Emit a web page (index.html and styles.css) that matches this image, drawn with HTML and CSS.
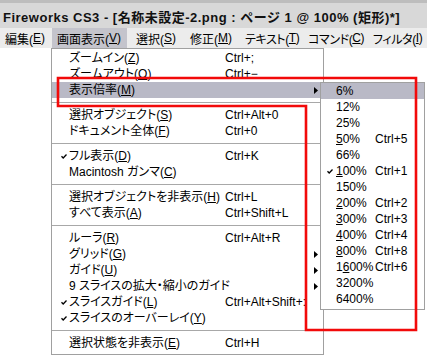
FILE: index.html
```html
<!DOCTYPE html>
<html lang="ja">
<head>
<meta charset="utf-8">
<title>Fireworks CS3</title>
<link rel="stylesheet" href="styles.css">
</head>
<body>
<div class="screen">
  <div class="titlebar"><span class="title">Fireworks CS3 - [名称未設定-2.png : ページ 1 @ 100% (矩形)*]</span></div>
  <div class="menubar">
    <span class="mb-item w1">編集(<u>E</u>)</span>
    <span class="mb-item w2 active">画面表示(<u>V</u>)</span>
    <span class="mb-item w3">選択(<u>S</u>)</span>
    <span class="mb-item w4">修正(<u>M</u>)</span>
    <span class="mb-item w5">テキスト(<u>T</u>)</span>
    <span class="mb-item w6">コマンド(<u>C</u>)</span>
    <span class="mb-item w7">フィルタ(<u>I</u>)</span>
  </div>
  <div class="workarea">
    <div class="menu">
      <div class="row"><span class="chk"></span><span class="lbl">ズームイン(<u>Z</u>)</span><span class="sc">Ctrl+;</span><span class="arr"></span></div>
      <div class="row"><span class="chk"></span><span class="lbl">ズームアウト(<u>O</u>)</span><span class="sc">Ctrl+−</span><span class="arr"></span></div>
      <div class="row hl"><span class="chk"></span><span class="lbl">表示倍率(<u>M</u>)</span><span class="sc"></span><span class="arr"><svg width="4" height="7" viewBox="0 0 4 7"><polygon points="0,0 4,3.5 0,7" fill="#000"/></svg></span></div>
      <div class="sep"></div>
      <div class="row"><span class="chk"></span><span class="lbl">選択オブジェクト(<u>S</u>)</span><span class="sc">Ctrl+Alt+0</span><span class="arr"></span></div>
      <div class="row"><span class="chk"></span><span class="lbl">ドキュメント全体(<u>F</u>)</span><span class="sc">Ctrl+0</span><span class="arr"></span></div>
      <div class="sep"></div>
      <div class="row"><span class="chk"><svg width="6" height="5" viewBox="0 0 6 5"><path d="M0.5 2.2 L2.2 4 L5.5 0.5" fill="none" stroke="#000" stroke-width="1.3"/></svg></span><span class="lbl">フル表示(<u>D</u>)</span><span class="sc">Ctrl+K</span><span class="arr"></span></div>
      <div class="row"><span class="chk"></span><span class="lbl">Macintosh ガンマ(<u>C</u>)</span><span class="sc"></span><span class="arr"></span></div>
      <div class="sep"></div>
      <div class="row"><span class="chk"></span><span class="lbl">選択オブジェクトを非表示(<u>H</u>)</span><span class="sc">Ctrl+L</span><span class="arr"></span></div>
      <div class="row"><span class="chk"></span><span class="lbl">すべて表示(<u>A</u>)</span><span class="sc">Ctrl+Shift+L</span><span class="arr"></span></div>
      <div class="sep"></div>
      <div class="row"><span class="chk"></span><span class="lbl">ルーラ(<u>R</u>)</span><span class="sc">Ctrl+Alt+R</span><span class="arr"></span></div>
      <div class="row"><span class="chk"></span><span class="lbl">グリッド(<u>G</u>)</span><span class="sc"></span><span class="arr"><svg width="4" height="7" viewBox="0 0 4 7"><polygon points="0,0 4,3.5 0,7" fill="#000"/></svg></span></div>
      <div class="row"><span class="chk"></span><span class="lbl">ガイド(<u>U</u>)</span><span class="sc"></span><span class="arr"><svg width="4" height="7" viewBox="0 0 4 7"><polygon points="0,0 4,3.5 0,7" fill="#000"/></svg></span></div>
      <div class="row"><span class="chk"></span><span class="lbl">9 スライスの拡大・縮小のガイド</span><span class="sc"></span><span class="arr"><svg width="4" height="7" viewBox="0 0 4 7"><polygon points="0,0 4,3.5 0,7" fill="#000"/></svg></span></div>
      <div class="row"><span class="chk"><svg width="6" height="5" viewBox="0 0 6 5"><path d="M0.5 2.2 L2.2 4 L5.5 0.5" fill="none" stroke="#000" stroke-width="1.3"/></svg></span><span class="lbl">スライスガイド(<u>L</u>)</span><span class="sc">Ctrl+Alt+Shift+:</span><span class="arr"></span></div>
      <div class="row"><span class="chk"><svg width="6" height="5" viewBox="0 0 6 5"><path d="M0.5 2.2 L2.2 4 L5.5 0.5" fill="none" stroke="#000" stroke-width="1.3"/></svg></span><span class="lbl">スライスのオーバーレイ(<u>Y</u>)</span><span class="sc"></span><span class="arr"></span></div>
      <div class="sep"></div>
      <div class="row"><span class="chk"></span><span class="lbl">選択状態を非表示(<u>E</u>)</span><span class="sc">Ctrl+H</span><span class="arr"></span></div>
    </div>

    <div class="submenu">
      <div class="srow hl"><span class="chk"></span><span class="pct">6%</span><span class="sc"></span></div>
      <div class="srow"><span class="chk"></span><span class="pct">12%</span><span class="sc"></span></div>
      <div class="srow"><span class="chk"></span><span class="pct">25%</span><span class="sc"></span></div>
      <div class="srow"><span class="chk"></span><span class="pct"><u>5</u>0%</span><span class="sc">Ctrl+5</span></div>
      <div class="srow"><span class="chk"></span><span class="pct">66%</span><span class="sc"></span></div>
      <div class="srow"><span class="chk"><svg width="6" height="5" viewBox="0 0 6 5"><path d="M0.5 2.2 L2.2 4 L5.5 0.5" fill="none" stroke="#000" stroke-width="1.3"/></svg></span><span class="pct"><u>1</u>00%</span><span class="sc">Ctrl+1</span></div>
      <div class="srow"><span class="chk"></span><span class="pct">150%</span><span class="sc"></span></div>
      <div class="srow"><span class="chk"></span><span class="pct"><u>2</u>00%</span><span class="sc">Ctrl+2</span></div>
      <div class="srow"><span class="chk"></span><span class="pct"><u>3</u>00%</span><span class="sc">Ctrl+3</span></div>
      <div class="srow"><span class="chk"></span><span class="pct"><u>4</u>00%</span><span class="sc">Ctrl+4</span></div>
      <div class="srow"><span class="chk"></span><span class="pct"><u>8</u>00%</span><span class="sc">Ctrl+8</span></div>
      <div class="srow"><span class="chk"></span><span class="pct">1<u>6</u>00%</span><span class="sc">Ctrl+6</span></div>
      <div class="srow"><span class="chk"></span><span class="pct">3200%</span><span class="sc"></span></div>
      <div class="srow"><span class="chk"></span><span class="pct">6400%</span><span class="sc"></span></div>
    </div>

    <svg class="annot" width="427" height="356" viewBox="0 0 427 356">
      <polygon points="58,78 416,78 416,330 306,330 306,106 58,106" fill="none" stroke="#f20a0a" stroke-width="2.6"/>
    </svg>
  </div>
</div>
</body>
</html>
```

FILE: styles.css
```css
* { box-sizing: border-box; }
html, body { margin: 0; padding: 0; background: #fff; }
body {
  font-family: "Liberation Sans", "Noto Sans CJK JP", sans-serif;
  font-size: 12px;
  color: #000;
  font-feature-settings: "palt";
}
.screen {
  position: relative;
  width: 427px;
  height: 356px;
  overflow: hidden;
  background: #fff;
}
u { text-decoration: underline; text-underline-offset: 1px; }

.titlebar {
  height: 28px;
  border-top: 3px solid #bdbdbd;
  background: #d8d8d8;
  display: flex;
  align-items: center;
  padding: 1px 0 0 3px;
}
.title {
  font-weight: bold;
  font-size: 13px;
  letter-spacing: 0.5px;
  white-space: nowrap;
  color: #111;
  font-feature-settings: normal;
}

.menubar {
  height: 20px;
  background: #ececec;
  display: flex;
  align-items: stretch;
}
.mb-item {
  display: flex;
  align-items: center;
  padding-left: 5px;
  white-space: nowrap;
  flex: none;
}
.mb-item.w1 { width: 52px; }
.mb-item.w2 { width: 75px; margin-right: 4px; }
.mb-item.w3 { width: 54px; }
.mb-item.w4 { width: 55px; }
.mb-item.w5 { width: 63px; letter-spacing: -0.4px; }
.mb-item.w6 { width: 65px; letter-spacing: -0.4px; }
.mb-item.w7 { width: 59px; letter-spacing: -0.4px; }
.mb-item.active { background: #c4c4cc; }

.workarea { position: relative; height: 308px; }

.menu {
  margin-left: 51px;
  width: 273px;
  border: 1px solid #a0a0a0;
  background: #fff;
  padding: 1px 0 3px;
}
.row {
  display: grid;
  grid-template-columns: 17px 156px 87px 1fr;
  height: 16px;
  align-items: center;
  white-space: nowrap;
  line-height: 16px;
}
.row.hl, .srow.hl { background: #b9b9c6; }
.chk { display: flex; align-items: center; padding-left: 9px; height: 16px; }
.lbl { overflow: visible; }
.arr { display: flex; align-items: center; padding-left: 2px; height: 16px; }
.sep {
  height: 9px;
  display: flex;
  align-items: center;
}
.sep::before {
  content: "";
  display: block;
  width: 100%;
  height: 1px;
  background: #a8a8a8;
}

.submenu {
  position: absolute;
  left: 320px;
  top: 34px;
  width: 105px;
  border: 1px solid #a0a0a0;
  background: #fff;
  padding-bottom: 2px;
}
.srow {
  display: grid;
  grid-template-columns: 15px 39px 1fr;
  height: 16px;
  line-height: 16px;
  align-items: center;
  white-space: nowrap;
}
.srow .chk { padding-left: 6px; }

.annot {
  position: absolute;
  left: 0;
  top: -48px;
  pointer-events: none;
}
```
